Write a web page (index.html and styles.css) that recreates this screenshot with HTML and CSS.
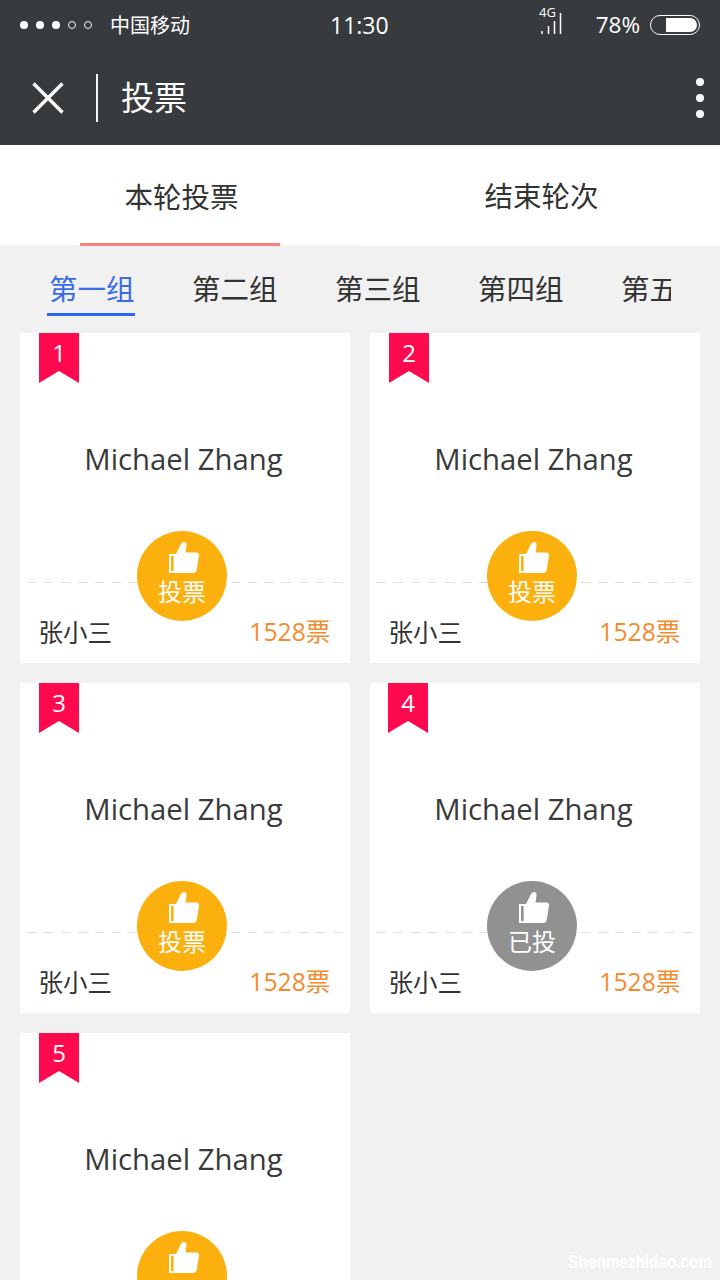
FILE: index.html
```html
<!DOCTYPE html>
<html lang="zh">
<head>
<meta charset="utf-8">
<title>投票</title>
<link rel="stylesheet" href="styles.css">
</head>
<body>
<svg class="sprite" width="0" height="0" aria-hidden="true">
  <symbol id="thumb" viewBox="0 0 30 31">
    <path fill="#fff" fill-rule="evenodd" d="M0 12h7v19H0zM2 14v15h2.600V14z"/>
    <path fill="#fff" d="M6.500 13L11 4Q12.800 0 15 0Q17.800 0 17.500 3.500L16.500 10.500H27.500Q30.300 10.500 30 13.500L27.800 27.500Q27.300 31 24 31H6.500z"/>
  </symbol>
</svg>
<div class="page">
  <header class="topbar">
    <div class="status">
      <div class="status-left">
        <div class="signal"><i class="dot"></i><i class="dot"></i><i class="dot"></i><i class="dot open"></i><i class="dot open"></i></div>
        <span class="carrier">中国移动</span>
      </div>
      <span class="time">11:30</span>
      <div class="status-right">
        <svg class="net" width="24" height="30" viewBox="0 0 24 30">
          <text x="0" y="11" class="net-label">4G</text>
          <path stroke="#fff" stroke-width="1.500" d="M3 25v3M9.500 20v8M15.500 15v13M21.500 7v21"/>
        </svg>
        <span class="pct">78%</span>
        <div class="battery"><div class="battery-fill"></div></div>
      </div>
    </div>
    <nav class="navbar">
      <svg class="close" width="32" height="32" viewBox="0 0 32 32"><path stroke="#fff" stroke-width="3.400" d="M1.500 1.500l29 29M30.500 1.500l-29 29"/></svg>
      <div class="nav-sep"></div>
      <h1 class="nav-title">投票</h1>
      <div class="more"><i></i><i></i><i></i></div>
    </nav>
  </header>

  <div class="tabs">
    <div class="tab active"><span>本轮投票</span></div>
    <div class="tab"><span>结束轮次</span></div>
  </div>

  <div class="groups">
    <span class="group active">第一组</span>
    <span class="group">第二组</span>
    <span class="group">第三组</span>
    <span class="group">第四组</span>
    <span class="group">第五组</span>
  </div>

  <main class="grid">
    <article class="card">
      <div class="badge">1</div>
      <div class="name">Michael Zhang</div>
      <div class="dash"></div>
      <div class="foot"><span class="person">张小三</span><span class="votes">1528票</span></div>
      <div class="vote"><svg class="thumb"><use href="#thumb"/></svg><span>投票</span></div>
    </article>
    <article class="card">
      <div class="badge">2</div>
      <div class="name">Michael Zhang</div>
      <div class="dash"></div>
      <div class="foot"><span class="person">张小三</span><span class="votes">1528票</span></div>
      <div class="vote"><svg class="thumb"><use href="#thumb"/></svg><span>投票</span></div>
    </article>
    <article class="card">
      <div class="badge">3</div>
      <div class="name">Michael Zhang</div>
      <div class="dash"></div>
      <div class="foot"><span class="person">张小三</span><span class="votes">1528票</span></div>
      <div class="vote"><svg class="thumb"><use href="#thumb"/></svg><span>投票</span></div>
    </article>
    <article class="card">
      <div class="badge shifted">4</div>
      <div class="name">Michael Zhang</div>
      <div class="dash"></div>
      <div class="foot"><span class="person">张小三</span><span class="votes">1528票</span></div>
      <div class="vote done"><svg class="thumb"><use href="#thumb"/></svg><span>已投</span></div>
    </article>
    <article class="card">
      <div class="badge">5</div>
      <div class="name">Michael Zhang</div>
      <div class="dash"></div>
      <div class="foot"><span class="person">张小三</span><span class="votes">1528票</span></div>
      <div class="vote"><svg class="thumb"><use href="#thumb"/></svg><span>投票</span></div>
    </article>
  </main>
  <div class="watermark">Shenmezhidao.com</div>
</div>
</body>
</html>
```
FILE: styles.css
```css
* { box-sizing: border-box; }
html, body { margin: 0; padding: 0; }
body {
  font-family: "Open Sans", "Noto Sans CJK SC", sans-serif;
  color: #333;
  background: #f1f1f1;
}
.sprite { position: absolute; }
.page {
  position: relative;
  width: 720px;
  height: 1280px;
  overflow: hidden;
  background: #f1f1f1;
}

/* top bar */
.topbar { height: 145px; background: #383b3e; color: #fff; }
.status {
  position: relative;
  height: 50px;
  display: flex;
  align-items: center;
  justify-content: space-between;
  padding: 0 20px;
}
.status-left { display: flex; align-items: center; gap: 18px; margin-top: 1px; }
.signal { display: flex; gap: 8px; margin-top: -1px; }
.dot { width: 8px; height: 8px; border-radius: 50%; background: #fff; }
.dot.open { background: transparent; border: 1px solid #fff; }
.carrier { font-size: 20px; line-height: 28px; }
.time {
  position: absolute;
  left: 330px;
  top: 9px;
  font-size: 23px;
  line-height: 32px;
}
.status-right { display: flex; align-items: center; }
.net { display: block; margin-right: 33px; margin-top: -9px; overflow: visible; }
.net-label { font: 13px "Open Sans", sans-serif; fill: #fff; }
.pct { font-size: 22.5px; line-height: 32px; margin-right: 10px; }
.battery {
  width: 50px;
  height: 20px;
  border: 1.5px solid #fff;
  border-radius: 10px;
  padding: 2px;
  display: flex;
  justify-content: flex-end;
}
.battery-fill { width: 31px; background: #fff; border-radius: 0 7px 7px 0; }

.navbar {
  height: 95px;
  display: flex;
  align-items: center;
  padding: 1px 16px 0 32px;
}
.close { display: block; }
.nav-sep { width: 2px; height: 48px; background: #f2fbf8; margin: 0 23px 0 32px; }
.nav-title { margin: 0; font-size: 33px; line-height: 44px; font-weight: 400; flex: 1; }
.more { display: flex; flex-direction: column; gap: 8px; }
.more i { display: block; width: 8px; height: 8px; border-radius: 50%; background: #fff; }

/* tabs */
.tabs { display: flex; height: 101px; }
.tab {
  flex: 1;
  height: 100px;
  margin-top: 1px;
  background: #fff;
  display: flex;
  align-items: center;
  justify-content: center;
  font-size: 28.5px;
  line-height: 40px;
  position: relative;
}
.tab.active { margin-top: 0; padding-top: 3px; }
.tab.active::after {
  content: "";
  position: absolute;
  left: 80px;
  bottom: -1px;
  width: 200px;
  height: 3px;
  background: #f98080;
}
.tab span { margin-left: 3px; }

/* groups */
.groups {
  height: 87px;
  width: 671px;
  overflow: hidden;
  display: flex;
  gap: 57.5px;
  padding: 23px 0 0 49px;
  white-space: nowrap;
}
.group {
  flex: none;
  height: 47px;
  font-size: 28.5px;
  line-height: 40px;
  position: relative;
}
.group.active { color: #3a6ce6; }
.group.active::after {
  content: "";
  position: absolute;
  left: -2px;
  right: 0;
  bottom: 0;
  height: 3px;
  background: #2a66ee;
}

/* cards */
.grid {
  display: grid;
  grid-template-columns: 330px 330px;
  gap: 20px;
  padding: 0 20px;
}
.card {
  position: relative;
  height: 330px;
  background: #fff;
  display: flex;
  flex-direction: column;
}
.badge {
  position: absolute;
  left: 19px;
  top: 0;
  width: 40px;
  height: 50px;
  padding-top: 4px;
  background: #ff0a4f;
  color: #fff;
  font-size: 24px;
  line-height: 32px;
  text-align: center;
  clip-path: polygon(0 0, 100% 0, 100% 100%, 50% 76%, 0 100%);
}
.badge.shifted { left: 18px; }
.name {
  height: 249px;
  padding: 3px 3px 0 0;
  display: flex;
  align-items: center;
  justify-content: center;
  font-size: 29.3px;
  line-height: 40px;
  color: #3a3a3a;
}
.dash {
  height: 1px;
  margin: 0 7px;
  background: repeating-linear-gradient(90deg, #dcdcdc 0 9px, transparent 9px 17px);
}
.foot {
  flex: 1;
  display: flex;
  justify-content: space-between;
  align-items: center;
  padding: 18px 19.500px 0 18.500px;
  font-size: 24.5px;
  line-height: 34px;
}
.votes { color: #f58a2c; font-size: 24.7px; margin-top: -1px; }
.person { margin-top: 1px; }
.vote {
  position: absolute;
  left: 117px;
  top: 198px;
  width: 90px;
  height: 90px;
  border-radius: 50%;
  background: #fbb00d;
  color: #fff;
  display: flex;
  flex-direction: column;
  align-items: center;
  padding-top: 11px;
  font-size: 24px;
  line-height: 32px;
}
.vote.done { background: #919191; }
.thumb { display: block; width: 30px; height: 31px; margin: 0 0 3px 4px; flex: none; }

.watermark {
  position: absolute;
  right: 8px;
  bottom: 8px;
  font-family: "Liberation Sans", sans-serif;
  font-weight: 700;
  font-size: 18px;
  line-height: 20px;
  color: #fff;
  transform: scaleX(0.85);
  transform-origin: right center;
}
```
